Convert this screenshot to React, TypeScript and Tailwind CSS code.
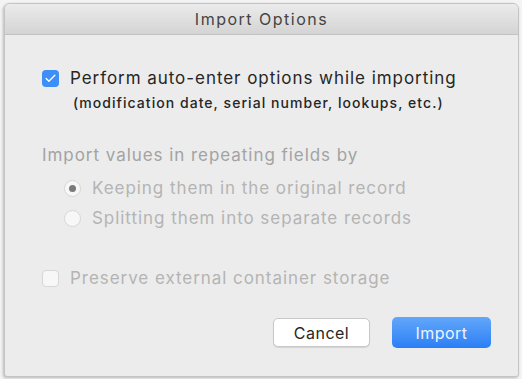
import { Check } from "lucide-react";

function Radio({ selected, label }: { selected?: boolean; label: string }) {
  return (
    <div className="flex h-[20px] items-center gap-[11px]">
      <span className="flex h-[17px] w-[17px] items-center justify-center rounded-full border border-[#d6d6d6] bg-[#f7f7f7]">
        {selected && <span className="h-[7px] w-[7px] rounded-full bg-[#7a7a7a]" />}
      </span>
      <span>{label}</span>
    </div>
  );
}

export default function App() {
  return (
    <div className="h-[379px] w-[522px] bg-[#f4f4f4] pl-[4px] pr-[3px] pt-[3px] pb-[2px] font-['Inter','Liberation_Sans',sans-serif]">
      <div className="flex h-full flex-col overflow-hidden rounded-t-[6px] rounded-b-[3px] border border-[#c4c4c4] bg-[#ececec] shadow-[-1px_1px_3px_rgba(0,0,0,0.25)]">
        <div className="flex h-[31px] shrink-0 items-center justify-center border-b border-[#c2c2c2] bg-gradient-to-b from-[#ebebeb] to-[#d4d4d4] text-[16px] tracking-[1.5px] text-[#444]">
          Import Options
        </div>

        <div className="flex flex-1 flex-col pl-[37px] pr-[27px] pt-[33px] text-[17px] leading-[20px] tracking-[0.95px] text-[#262626]">
          <div className="flex h-[20px] items-center gap-[11px]">
            <span className="flex h-[17px] w-[17px] items-center justify-center rounded-[4px] bg-[#3d8ef6]">
              <Check className="h-[13px] w-[13px] text-white" strokeWidth={2.5} />
            </span>
            <span>Perform auto-enter options while importing</span>
          </div>
          <div className="mt-[5px] pl-[31px] text-[14px] font-medium tracking-[1.05px] text-[#262626]">
            (modification date, serial number, lookups, etc.)
          </div>

          <div className="mt-[32px] text-[#a3a3a3]">Import values in repeating fields by</div>
          <div className="mt-[13px] flex flex-col gap-[10px] pl-[22px] text-[#b4b4b4]">
            <Radio selected label="Keeping them in the original record" />
            <Radio label="Splitting them into separate records" />
          </div>

          <div className="mt-[40px] flex h-[20px] items-center gap-[11px] text-[#b4b4b4]">
            <span className="h-[17px] w-[17px] rounded-[4px] border border-[#d6d6d6] bg-[#f7f7f7]" />
            <span>Preserve external container storage</span>
          </div>

          <div className="mt-[29px] flex items-center justify-end gap-[22px]">
            <button className="h-[29px] w-[97px] rounded-[5px] border border-[#c8c8c8] bg-white text-[16px] tracking-[0.5px] text-[#262626] shadow-[0_1px_1px_rgba(0,0,0,0.1)]">
              Cancel
            </button>
            <button className="h-[31px] w-[99px] rounded-[5px] bg-gradient-to-b from-[#62a7fa] to-[#2a7ef5] text-[16px] tracking-[0.5px] text-[#eef4ff]">
              Import
            </button>
          </div>
        </div>
      </div>
    </div>
  );
}
